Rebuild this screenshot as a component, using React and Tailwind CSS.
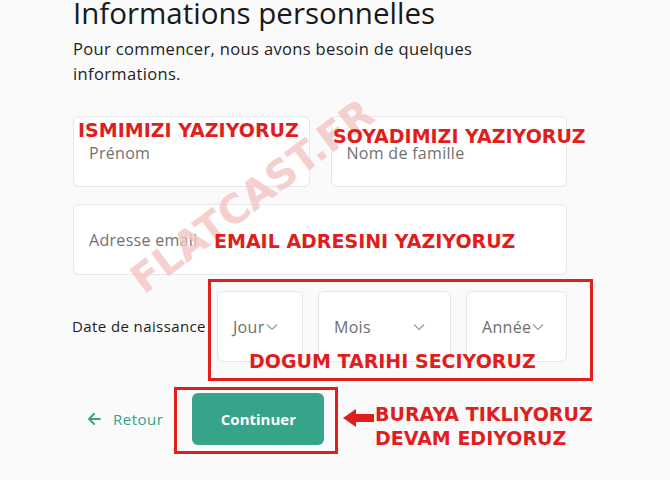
import React from 'react'

const Chevron = () => (
  <svg width="12" height="8" viewBox="0 0 12 8" fill="none" stroke="#9a9a9a" strokeWidth="1.2">
    <path d="M1 1.5 L6 6.5 L11 1.5" />
  </svg>
)

const SelectBox = ({ label, w, gap }) => (
  <div className={`h-[71px] ${w} flex items-center rounded-md border border-[#e6e6e6] bg-white pl-[15px] text-[16px] tracking-[0.3px] text-[#6f6f6f]`}>
    <span>{label}</span>
    <span className={gap}><Chevron /></span>
  </div>
)

const Note = ({ className, children }) => (
  <div
    className={`absolute whitespace-nowrap font-bold text-[19px] leading-[24px] text-[#e01e1e] ${className}`}
    style={{ fontFamily: '"DejaVu Sans", Verdana, sans-serif' }}
  >
    {children}
  </div>
)

const App = () => {
  return (
    <div
      className="relative w-[670px] h-[480px] overflow-hidden bg-[#fafafa] text-[#1c1c1c]"
      style={{ fontFamily: '"Open Sans", "Liberation Sans", Arial, sans-serif' }}
    >
      <div className="pl-[73px] w-[567px]">
        <h1 className="text-[29.5px] leading-[35px] -mt-[5px] font-medium text-[#191919]">Informations personnelles</h1>
        <p className="mt-[6px] text-[16.5px] leading-[25px] tracking-[0.35px] text-[#222]">
          Pour commencer, nous avons besoin de quelques
          <br />
          informations.
        </p>

        {/* nom / prenom */}
        <div className="mt-[30px] grid grid-cols-2 gap-[21px]">
          <input
            className="h-[71px] rounded-md border border-[#e6e6e6] bg-white px-[15px] pt-[2px] text-[16px] tracking-[0.3px] outline-none placeholder:text-[#717171]"
            placeholder="Prénom"
          />
          <input
            className="h-[71px] rounded-md border border-[#e6e6e6] bg-white px-[15px] pt-[2px] text-[16px] tracking-[0.3px] outline-none placeholder:text-[#717171]"
            placeholder="Nom de famille"
          />
        </div>

        <input
          className="mt-[17px] block w-full h-[71px] rounded-md border border-[#e6e6e6] bg-white px-[15px] text-[16px] tracking-[0.3px] outline-none placeholder:text-[#717171]"
          placeholder="Adresse email"
        />

        {/* date */}
        <div className="mt-[16px] flex items-center -ml-[1px]">
          <span className="text-[15px] w-[147px] tracking-[0.4px] text-[#1c1c1c]">Date de naissance</span>
          <div className="flex gap-[15px]">
            <SelectBox label="Jour" w="w-[86px]" gap="ml-[2px] mt-[1px]" />
            <SelectBox label="Mois" w="w-[133px]" gap="ml-[42px] mt-[1px]" />
            <SelectBox label="Année" w="w-[101px]" gap="ml-[1px] mt-[1px]" />
          </div>
        </div>

        {/* actions */}
        <div className="mt-[31px] flex items-center">
          <button className="flex items-center gap-[12px] pl-[15px] text-[15px] font-medium tracking-[0.5px] text-[#33a38a]">
            <svg width="13" height="12" viewBox="0 0 13 12" fill="none" stroke="#33a38a" strokeWidth="1.8" strokeLinecap="round" strokeLinejoin="round">
              <path d="M12 6 H1.5 M6 1 L1 6 L6 11" />
            </svg>
            Retour
          </button>
          <button className="ml-[29px] h-[52px] w-[132px] rounded-md bg-[#36a48b] text-[15px] font-bold text-white">
            Continuer
          </button>
        </div>
      </div>

      {/* watermark */}
      <div
        className="absolute left-[252px] top-[196px] -translate-x-1/2 -translate-y-1/2 -rotate-[37deg] whitespace-nowrap text-[40px] font-bold text-[#f5c4c4] opacity-80"
        style={{ fontFamily: '"DejaVu Sans", Verdana, sans-serif' }}
      >
        FLATCAST.FR
      </div>

      {/* red frames */}
      <div className="absolute left-[208px] top-[279px] w-[385px] h-[102px] border-[3px] border-[#e01e1e]" />
      <div className="absolute left-[174px] top-[387px] w-[164px] h-[67px] border-[3px] border-[#e01e1e]" />

      {/* arrow */}
      <svg className="absolute left-[343px] top-[409px]" width="31" height="18" viewBox="0 0 31 18">
        <path d="M0 9 L13 0 L13 5 L31 5 L31 13 L13 13 L13 18 Z" fill="#e01e1e" />
      </svg>

      <Note className="left-[78px] top-[118px]">ISMIMIZI YAZIYORUZ</Note>
      <Note className="left-[333px] top-[124px]">SOYADIMIZI YAZIYORUZ</Note>
      <Note className="left-[214px] top-[229px]">EMAIL ADRESINI YAZIYORUZ</Note>
      <Note className="left-[249px] top-[349px]">DOGUM TARIHI SECIYORUZ</Note>
      <Note className="left-[375px] top-[402px] text-[18px] leading-[23px]">
        BURAYA TIKLIYORUZ
        <br />
        DEVAM EDIYORUZ
      </Note>
    </div>
  )
}

export default App
